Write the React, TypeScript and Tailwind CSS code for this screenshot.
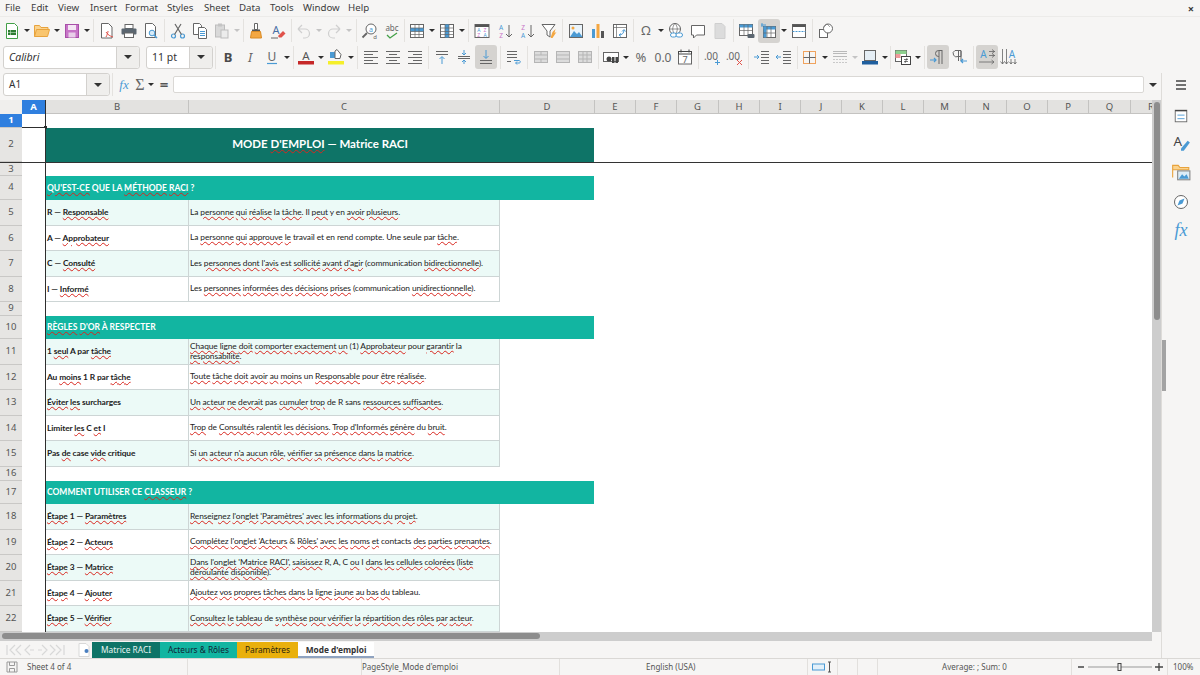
import type { ReactNode } from "react";

const uiFont = "font-['Noto_Sans','Open_Sans',sans-serif]";
const cellFont = "font-['Lato','Noto_Sans',sans-serif]";
const BL = "#4a9ad4";
const GR = "#666666";

function Svg({ children, size = "w-[18px] h-[18px]" }: { children: ReactNode; size?: string }) {
  return (
    <svg viewBox="0 0 18 18" className={size} fill="none" strokeWidth="1">
      {children}
    </svg>
  );
}

function Tool({ children, active }: { children: ReactNode; active?: boolean }) {
  return (
    <div className={`w-[22px] h-[24px] shrink-0 flex items-center justify-center rounded-[3px] ${active ? "bg-[#d5d3d0]" : ""}`}>
      <Svg>{children}</Svg>
    </div>
  );
}

function Drop({ light }: { light?: boolean }) {
  return (
    <div className="w-[8px] h-[23px] shrink-0 flex items-center justify-center">
      <span className={`w-0 h-0 border-x-[3px] border-x-transparent border-t-[3px] ${light ? "border-t-[#c4c4c4]" : "border-t-[#2e2e2e]"}`} />
    </div>
  );
}

function Sep({ w }: { w: string }) {
  return (
    <div className={`${w} shrink-0 flex justify-center`}>
      <span className="w-px h-[23px] bg-[#e4e2df]" />
    </div>
  );
}

function Lines({ ys, x1 = 3, x2 = 15, color = GR }: { ys: number[]; x1?: number; x2?: number; color?: string }) {
  return (
    <>
      {ys.map((y) => (
        <path key={y} d={`M${x1} ${y + 0.5}H${x2}`} stroke={color} />
      ))}
    </>
  );
}

function GridIcon({ hl }: { hl: "row" | "col" }) {
  return (
    <>
      <rect x="2.5" y="2.5" width="13" height="13" fill="#fff" stroke={GR} />
      {hl === "row" ? <rect x="2.5" y="6" width="13" height="3.5" fill={BL} /> : <rect x="7" y="2.5" width="4" height="13" fill={BL} />}
      <path d="M2.5 6h13M2.5 9.5h13M2.5 12.5h13M7 2.5v13M11 2.5v13" stroke={GR} strokeWidth="0.7" />
    </>
  );
}

function MergeIcon({ variant }: { variant: number }) {
  return (
    <>
      <rect x="2.5" y="3.5" width="13" height="11" fill="#dcdcdc" stroke="#b5b5b5" />
      <path d={variant === 0 ? "M2.5 7h13M2.5 11h13M9 3.5V7M9 11v3.5" : variant === 1 ? "M2.5 7h13M2.5 11h13" : "M2.5 7h13M2.5 11h13M7 3.5v11M11 3.5v11"} stroke="#b5b5b5" />
    </>
  );
}

function Letter({ x, y, size, fill, children, weight, family, italic }: { x: number; y: number; size: number; fill: string; children: string; weight?: number; family?: string; italic?: boolean }) {
  return (
    <text x={x} y={y} fontSize={size} fill={fill} fontWeight={weight} fontStyle={italic ? "italic" : undefined} fontFamily={family ?? "Noto Sans, sans-serif"} textAnchor="middle">
      {children}
    </text>
  );
}

function ToolbarOne() {
  return (
    <div className="h-[28px] flex items-center pl-[1px] pb-[1px]">
      <Tool>
        <path d="M3.5 1.5h8l3 3v12h-11z" fill="#fff" stroke="#43a047" />
        <rect x="5" y="8" width="8" height="5" fill="#2e7d32" />
        <path d="M7.5 8v5M5 10.5h8" stroke="#c8e6c9" strokeWidth="0.6" />
      </Tool>
      <Drop />
      <Tool>
        <path d="M1.5 14.5v-11h5l1.5 2h7v2" fill="#fbd38d" stroke="#e8a33d" />
        <path d="M1.5 14.5l2-7h13l-2 7z" fill="#f9c56e" stroke="#e8a33d" />
      </Tool>
      <Drop />
      <Tool>
        <rect x="2.5" y="2.5" width="13" height="13" fill="#c774c7" stroke="#a84fa8" />
        <rect x="5" y="3" width="8" height="5" fill="#f4e6f4" />
        <rect x="5.5" y="10.5" width="7" height="5" fill="#e9cfe9" />
      </Tool>
      <Drop />
      <Sep w="w-[5px]" />
      <Tool>
        <path d="M3.5 1.500h7l3.500 3.500v11h-10.500z" fill="#fff" stroke={GR} />
        <path d="M8 10c2 3 4 4 7 5M8 15c1-2 2-4 2-6" stroke="#e0524a" />
      </Tool>
      <Tool>
        <rect x="5" y="2.500" width="8" height="4" fill="#fff" stroke={GR} />
        <rect x="1.500" y="6.500" width="15" height="6" rx="1" fill="#5b6670" />
        <rect x="4.500" y="11" width="9" height="4.500" fill="#fff" stroke={GR} />
      </Tool>
      <Tool>
        <path d="M3.500 1.500h7l3 3v11h-10z" fill="#fff" stroke={GR} />
        <circle cx="10" cy="11" r="2.800" fill="#d7ebf8" stroke={BL} />
        <path d="M12 13l3 3" stroke={BL} strokeWidth="1.500" />
      </Tool>
      <Sep w="w-[5px]" />
      <Tool>
        <circle cx="4.500" cy="14" r="2" stroke={BL} strokeWidth="1.200" />
        <circle cx="13.500" cy="14" r="2" stroke={BL} strokeWidth="1.200" />
        <path d="M5.500 12.500L12 2M12.500 12.500L6 2" stroke={GR} strokeWidth="1.200" />
      </Tool>
      <Tool>
        <path d="M2.500 1.500h6l2 2v9h-8z" fill="#fff" stroke={GR} />
        <path d="M7.500 5.500h6l2 2v9h-8z" fill="#fff" stroke={GR} />
        <Lines ys={[9, 11, 13]} x1={9} x2={14} color={BL} />
      </Tool>
      <Tool>
        <rect x="2.500" y="3" width="9" height="12" fill="#d9d9d9" stroke="#bdbdbd" />
        <rect x="5" y="1.500" width="4" height="3" fill="#c4c4c4" />
        <rect x="8" y="8" width="7" height="8" fill="#ececec" stroke="#bdbdbd" />
      </Tool>
      <Drop light />
      <Sep w="w-[4px]" />
      <Tool>
        <path d="M7.500 1.500h3v6h-3z" fill="#fff" stroke={GR} />
        <path d="M5 7.500h8v2H5z" fill="#555" />
        <path d="M4.500 9.500h9l1 6.500h-11z" fill="#f4a742" stroke="#d98a24" />
      </Tool>
      <Tool>
        <Letter x={7} y={12} size={11} fill="#4a6fa5">A</Letter>
        <path d="M9 14l5-5 2.500 2.500-4 4h-2.500z" fill="#e0524a" />
        <path d="M2 16h7" stroke={GR} />
      </Tool>
      <Sep w="w-[4px]" />
      <Tool>
        <path d="M3 7l4-4M3 7l4 4M3 7h7a4.500 4.500 0 0 1 0 9H8" stroke="#cfcfcf" strokeWidth="1.200" />
      </Tool>
      <Drop light />
      <Tool>
        <path d="M15 7l-4-4M15 7l-4 4M15 7H8a4.500 4.500 0 0 0 0 9h2" stroke="#cfcfcf" strokeWidth="1.200" />
      </Tool>
      <Drop light />
      <Sep w="w-[6px]" />
      <Tool>
        <circle cx="10" cy="7" r="5" fill="#fff" stroke={GR} />
        <Letter x={10} y={9.500} size={7} fill={BL}>a</Letter>
        <path d="M6 11l-4.500 4.500" stroke={GR} strokeWidth="1.800" />
        <Letter x={14} y={17} size={6} fill={GR}>d</Letter>
      </Tool>
      <Tool>
        <Letter x={9} y={9} size={8} fill={GR}>abc</Letter>
        <path d="M4 13l3 3 7-5" stroke="#43a047" strokeWidth="1.300" />
      </Tool>
      <Sep w="w-[3px]" />
      <Tool><GridIcon hl="row" /></Tool>
      <Drop />
      <Tool><GridIcon hl="col" /></Tool>
      <Drop />
      <Sep w="w-[5px]" />
      <Tool>
        <rect x="2" y="2.500" width="14" height="13" fill="#fff" stroke={GR} />
        <rect x="2" y="2.500" width="14" height="2.500" fill="#555" />
        <Letter x={5.800} y={10} size={5} fill={BL}>A</Letter>
        <Letter x={12} y={10} size={5} fill="#c774c7">Z</Letter>
        <Letter x={5.800} y={15} size={5} fill="#c774c7">Z</Letter>
        <Letter x={12} y={15} size={5} fill={BL}>A</Letter>
      </Tool>
      <div className="w-px shrink-0" />
      <Tool>
        <Letter x={5} y={8} size={6.500} fill={BL}>A</Letter>
        <Letter x={5} y={16} size={6.500} fill="#c774c7">Z</Letter>
        <path d="M13 3v12M10 12l3 3 3-3" stroke={GR} />
      </Tool>
      <Tool>
        <Letter x={5} y={8} size={6.500} fill="#c774c7">Z</Letter>
        <Letter x={5} y={16} size={6.500} fill={BL}>A</Letter>
        <path d="M13 3v12M10 12l3 3 3-3" stroke={GR} />
      </Tool>
      <Tool>
        <path d="M2 2.500h13l-5 6.500v6l-3-2v-4z" fill="#fff" stroke={GR} />
        <path d="M10.500 16l2-6 3-3-1 4 2-1-4 6z" fill="#f4a742" />
      </Tool>
      <Sep w="w-[5px]" />
      <Tool>
        <rect x="2.500" y="2.500" width="13" height="13" fill="#eaf4fb" stroke={GR} />
        <circle cx="6" cy="6" r="1.500" fill="#f4a742" />
        <path d="M3 15l4-6 3 3 2-2 3.500 5z" fill={BL} />
      </Tool>
      <Tool>
        <rect x="3" y="7" width="3" height="9" fill={BL} />
        <rect x="7.500" y="2" width="3" height="14" fill="#f4a742" />
        <rect x="12" y="9" width="3" height="7" fill="#555" />
      </Tool>
      <Tool>
        <rect x="2.500" y="2.500" width="13" height="13" fill="#fff" stroke={GR} />
        <path d="M2.500 5.500h13M5.500 2.500v13" stroke={GR} strokeWidth="0.700" />
        <path d="M8 13c3 0 5-2 5-5M11 9.500L13 7.500l1.500 2M8 13l2-1.500M8 13l2 1.500" stroke={BL} />
      </Tool>
      <Sep w="w-[4px]" />
      <Tool>
        <Letter x={9} y={13} size={13} fill={GR}>Ω</Letter>
      </Tool>
      <Drop />
      <Tool>
        <circle cx="8" cy="7" r="5.500" fill="#fff" stroke={GR} />
        <path d="M2.500 7h11M8 1.500c-3 3-3 8 0 11M8 1.500c3 3 3 8 0 11" stroke={GR} strokeWidth="0.700" />
        <rect x="3.500" y="11" width="6" height="4" rx="2" fill="#fff" stroke={BL} />
        <rect x="9" y="11" width="6.500" height="4" rx="2" fill="#fff" stroke={BL} />
      </Tool>
      <Tool>
        <path d="M2.500 3.500h13v9.500H7.500L4.500 16v-3h-2z" fill="#fff" stroke={GR} />
      </Tool>
      <Tool>
        <path d="M4 1.500h7l3 3v12H4z" fill="#dcdcdc" stroke="#cfcfcf" />
      </Tool>
      <Sep w="w-[5px]" />
      <Tool>
        <rect x="1.500" y="2.500" width="13" height="11" fill="#fff" stroke={GR} />
        <rect x="1.500" y="2.500" width="13" height="3" fill={BL} />
        <path d="M1.500 8.500h13M6 2.500v11M10 2.500v11" stroke={GR} strokeWidth="0.700" />
        <rect x="9.500" y="12" width="7" height="4" rx="1" fill="#5b6670" />
      </Tool>
      <Tool active>
        <rect x="3.500" y="4.500" width="12" height="11" fill="#fff" stroke={GR} />
        <rect x="3.500" y="4.500" width="12" height="3" fill={BL} />
        <rect x="3.500" y="4.500" width="3" height="11" fill={BL} />
        <path d="M3.500 11h12M7 4.500v11M11 4.500v11" stroke={GR} strokeWidth="0.700" />
        <path d="M2 1v4M1 3h5" stroke={BL} />
      </Tool>
      <Drop />
      <Tool>
        <rect x="2.500" y="2.500" width="13" height="13" fill="#fff" stroke={GR} />
        <rect x="2.500" y="2.500" width="13" height="2.500" fill="#555" />
        <path d="M2.500 9.500h13" stroke={BL} strokeDasharray="2 1" />
      </Tool>
      <Sep w="w-[5px]" />
      <Tool>
        <rect x="2.500" y="7.500" width="8" height="8" fill="#fff" stroke={GR} />
        <circle cx="11" cy="6.500" r="4.500" fill="#fff" stroke={GR} />
        <path d="M7 5l3-3 3 3" stroke={GR} strokeWidth="0.600" />
      </Tool>
    </div>
  );
}

function AlignIcon({ kind }: { kind: "l" | "c" | "r" }) {
  const rows = [3, 6, 9, 12, 15];
  return (
    <>
      {rows.map((y, i) => {
        const short = i % 2 === 1;
        const x1 = kind === "l" ? 2 : kind === "c" ? (short ? 5 : 2) : short ? 7 : 2;
        const x2 = kind === "l" ? (short ? 11 : 16) : kind === "c" ? (short ? 13 : 16) : 16;
        return <path key={y} d={`M${x1} ${y + 0.5}H${x2}`} stroke={GR} />;
      })}
    </>
  );
}

function ToolbarTwo() {
  return (
    <div className="h-[28px] flex items-center pl-[3px] pb-[4px]">
      <div className="w-[137px] h-[23px] shrink-0 flex bg-white border border-[#d3d1ce] rounded-[3px]">
        <span className="flex-1 pl-[5px] text-[10.500px] italic leading-[21px] text-[#333]">Calibri</span>
        <span className="w-[23px] bg-[#efeeec] border-l border-[#d3d1ce] rounded-r-[3px] flex items-center justify-center">
          <span className="w-0 h-0 border-x-[4px] border-x-transparent border-t-[4px] border-t-[#333]" />
        </span>
      </div>
      <div className="w-[67px] h-[23px] ml-[6px] shrink-0 flex bg-white border border-[#d3d1ce] rounded-[3px]">
        <span className="flex-1 pl-[5px] text-[10.500px] leading-[21px] text-[#333]">11 pt</span>
        <span className="w-[23px] bg-[#efeeec] border-l border-[#d3d1ce] rounded-r-[3px] flex items-center justify-center">
          <span className="w-0 h-0 border-x-[4px] border-x-transparent border-t-[4px] border-t-[#333]" />
        </span>
      </div>
      <Sep w="w-[4px]" />
      <Tool><Letter x={9} y={14} size={13} fill="#4a4a4a" weight={700}>B</Letter></Tool>
      <Tool><Letter x={9} y={14} size={13} fill="#666" italic>I</Letter></Tool>
      <Tool>
        <Letter x={9} y={12.500} size={12} fill="#666">U</Letter>
        <path d="M4 15.500h10" stroke={BL} strokeWidth="1.200" />
      </Tool>
      <Drop />
      <Sep w="w-[4px]" />
      <Tool>
        <Letter x={9} y={12} size={11.500} fill="#555">A</Letter>
        <rect x="1" y="13" width="16" height="3.500" fill="#c62828" />
      </Tool>
      <Drop />
      <Tool>
        <path d="M3 4h5v6H3z" fill={BL} />
        <path d="M8 3l2-1.500 4 5-1 4H8z" fill="#fff" stroke={GR} />
        <rect x="1" y="13" width="16" height="3.500" fill="#f5ef2a" />
      </Tool>
      <Drop />
      <Sep w="w-[5px]" />
      <Tool><AlignIcon kind="l" /></Tool>
      <Tool><AlignIcon kind="c" /></Tool>
      <Tool><AlignIcon kind="r" /></Tool>
      <Sep w="w-[5px]" />
      <Tool>
        <Lines ys={[3, 6]} x1={3} x2={15} />
        <path d="M9 16V9M6.500 11L9 8.500l2.500 2.500" stroke={BL} />
      </Tool>
      <Tool>
        <Lines ys={[8, 10]} x1={3} x2={15} />
        <path d="M9 2v5M7 5l2 2 2-2M9 16v-4M7 14l2-2 2 2" stroke={BL} />
      </Tool>
      <Tool active>
        <Lines ys={[12, 15]} x1={3} x2={15} />
        <path d="M9 2v8M6.500 8L9 10.500 11.500 8" stroke={BL} />
      </Tool>
      <Sep w="w-[6px]" />
      <Tool>
        <Lines ys={[3, 6, 9]} x1={2} x2={12} />
        <path d="M2 13.500h4" stroke={GR} />
        <path d="M9 12.500h5c1.500 0 2 2.500 0 2.500h-3M12 13.500L10.500 15l1.500 1.500" stroke={BL} />
      </Tool>
      <Sep w="w-[5px]" />
      <Tool><MergeIcon variant={0} /></Tool>
      <Tool><MergeIcon variant={1} /></Tool>
      <Tool><MergeIcon variant={2} /></Tool>
      <Sep w="w-[4px]" />
      <Tool>
        <rect x="1.500" y="4.500" width="15" height="9" fill="#fff" stroke={GR} />
        <circle cx="7" cy="11" r="2.500" fill="#444" />
        <rect x="10" y="9" width="2.500" height="6" fill="#444" />
        <rect x="13.500" y="9" width="2.500" height="6" fill="#444" />
      </Tool>
      <Drop />
      <Tool><Letter x={9} y={14} size={13} fill={GR}>%</Letter></Tool>
      <Tool><Letter x={9} y={14} size={12} fill={GR}>0.0</Letter></Tool>
      <Tool>
        <rect x="2.500" y="3.500" width="13" height="12.500" fill="#fff" stroke={GR} />
        <path d="M2.500 3.500h13v2.500h-13zM5 1.500v3M13 1.500v3" stroke="#444" />
        <Letter x={9} y={14.500} size={9} fill={GR}>7</Letter>
      </Tool>
      <Sep w="w-[5px]" />
      <Tool>
        <Letter x={8} y={12} size={10} fill={GR}>.00</Letter>
        <path d="M12 14.500h5M14.500 12v5" stroke={BL} />
      </Tool>
      <Tool>
        <Letter x={8} y={12} size={10} fill={GR}>.00</Letter>
        <path d="M12 12l5 5M17 12l-5 5" stroke="#e0524a" />
      </Tool>
      <Sep w="w-[6px]" />
      <Tool>
        <Lines ys={[3, 6, 9, 12, 15]} x1={8} x2={16} />
        <path d="M1 9h5M4 7l2 2-2 2" stroke={BL} />
      </Tool>
      <Tool>
        <Lines ys={[3, 6, 9, 12, 15]} x1={8} x2={16} />
        <path d="M6 9H1M3 7L1 9l2 2" stroke={BL} />
      </Tool>
      <Sep w="w-[4px]" />
      <Tool>
        <rect x="2.500" y="3.500" width="12" height="12" stroke="#f0a35e" />
        <path d="M8.500 3.500v12M2.500 9.500h12" stroke={GR} />
      </Tool>
      <Drop />
      <Tool>
        <Lines ys={[3, 5, 8]} x1={2} x2={16} color="#b9b9b9" />
        <path d="M2 11.500h14M2 14.500h14" stroke="#c9c9c9" strokeDasharray="2 1" />
      </Tool>
      <Drop light />
      <Tool>
        <rect x="3.500" y="2.500" width="11" height="10" fill="#e5eef5" stroke={GR} />
        <rect x="1" y="13" width="16" height="3.500" fill="#1f5f9e" />
      </Tool>
      <Drop />
      <Sep w="w-[3px]" />
      <Tool>
        <rect x="1.500" y="2.500" width="11" height="11" fill="#fff" stroke={GR} />
        <rect x="1.500" y="2.500" width="11" height="3.500" fill="#8ed08e" />
        <rect x="1.500" y="6" width="5" height="4" fill="#ef9a9a" />
        <rect x="7.500" y="8.500" width="9" height="8" fill="#fff" stroke="#444" />
        <path d="M10 11.500h4M10 13.500h4M13 10l-2 5" stroke="#444" strokeWidth="0.700" />
      </Tool>
      <Drop />
      <Sep w="w-[5px]" />
      <Tool active>
        <path d="M13 2v14M10 2v14M13 2.500H9.500a3 3 0 0 0 0 6H10" stroke={GR} />
        <path d="M1 12h6M5 10l2 2-2 2" stroke={BL} strokeWidth="1.200" />
      </Tool>
      <Tool>
        <path d="M4 2.500h6v6H7a3 3 0 0 1-3-6zM7.500 3v10M10 3v10" stroke={GR} />
        <path d="M16 13h-6M12 11l-2 2 2 2" stroke={BL} strokeWidth="1.200" />
      </Tool>
      <Sep w="w-[5px]" />
      <Tool active>
        <Letter x={5.500} y={9.500} size={10} fill={BL}>A</Letter>
        <path d="M11 3.500h6M14 1.500l2.500 2-2.500 2M11 7.500h6M14 5.500l2.500 2-2.500 2M1 14h15M13.500 12l2.500 2-2.500 2" stroke={GR} strokeWidth="0.800" />
      </Tool>
      <Tool>
        <Letter x={12} y={9.500} size={10} fill={BL}>A</Letter>
        <path d="M2.500 1v15M.5 13.500l2 2.500 2-2.500M6.500 1v15M4.500 13.500l2 2.500 2-2.500M11 11v5M9.500 14l1.500 2 1.500-2M15 11v5M13.500 14l1.500 2 1.500-2" stroke={GR} strokeWidth="0.800" />
      </Tool>
    </div>
  );
}

function FormulaBar() {
  return (
    <div className="h-[27px] flex items-center pl-[3px] pb-[4px] shrink-0">
      <div className="w-[107px] h-[23px] shrink-0 flex bg-white border border-[#d3d1ce] rounded-[3px]">
        <span className="flex-1 pl-[5px] text-[10px] leading-[21px] text-[#333]">A1</span>
        <span className="w-[23px] bg-[#efeeec] border-l border-[#d3d1ce] rounded-r-[3px] flex items-center justify-center">
          <span className="w-0 h-0 border-x-[4px] border-x-transparent border-t-[4px] border-t-[#333]" />
        </span>
      </div>
      <Sep w="w-[4px]" />
      <div className="w-[18px] ml-[1px] shrink-0 text-center text-[#4a9ad4] text-[13px] italic font-['Liberation_Serif',serif]">fx</div>
      <div className="w-[14px] shrink-0 text-center text-[#666] text-[16px] leading-none font-['Liberation_Serif',serif]">Σ</div>
      <Drop />
      <div className="w-[18px] shrink-0 text-center text-[#555] text-[15px] font-bold leading-none">=</div>
      <div className="w-[971px] h-[17px] shrink-0 bg-white border border-[#dad8d5] rounded-[2px]" />
      <div className="flex-1 flex justify-center">
        <span className="w-0 h-0 border-x-[4px] border-x-transparent border-t-[4px] border-t-[#333]" />
      </div>
    </div>
  );
}

const columns = [
  { n: "B", w: "w-[143px]" },
  { n: "C", w: "w-[311px]" },
  { n: "D", w: "w-[95px]" },
  { n: "E", w: "w-[41px]" },
  { n: "F", w: "w-[41px]" },
  { n: "G", w: "w-[42px]" },
  { n: "H", w: "w-[41px]" },
  { n: "I", w: "w-[41px]" },
  { n: "J", w: "w-[41px]" },
  { n: "K", w: "w-[41px]" },
  { n: "L", w: "w-[41px]" },
  { n: "M", w: "w-[42px]" },
  { n: "N", w: "w-[41px]" },
  { n: "O", w: "w-[41px]" },
  { n: "P", w: "w-[41px]" },
  { n: "Q", w: "w-[42px]" },
  { n: "R", w: "w-[41px]" },
];

// {mot} = souligné par le correcteur
function Spell({ text }: { text: string }) {
  return (
    <>
      {text.split(/(\{[^}]+\})/).map((part, i) =>
        part.startsWith("{") ? (
          <span key={i} className="underline decoration-wavy decoration-[#d8261e] decoration-[0.7px] underline-offset-[1px]">
            {part.slice(1, -1)}
          </span>
        ) : (
          <span key={i}>{part}</span>
        ),
      )}
    </>
  );
}

function RowHead({ n, active }: { n: number; active?: boolean }) {
  return (
    <div className={`w-[22px] shrink-0 flex items-center justify-center text-[9.500px] border-b border-[#c9c8c6] ${uiFont} ${active ? "bg-[#2f7fdf] text-white font-bold" : "bg-[#e6e5e3] text-[#555]"}`}>
      {n}
    </div>
  );
}

function ACell({ selected }: { selected?: boolean }) {
  return (
    <div className={`relative w-[24px] shrink-0 bg-white border-r border-r-[#2e2e2e] ${selected ? "border-b border-b-[#2e2e2e]" : ""}`}>
      {selected && <span className="absolute right-[-2px] bottom-[-2px] w-[3px] h-[3px] bg-[#2e2e2e]" />}
    </div>
  );
}

function BlankRow({ n, h, selected }: { n: number; h: string; selected?: boolean }) {
  return (
    <div className={`${h} shrink-0 flex`}>
      <RowHead n={n} active={selected} />
      <ACell selected={selected} />
      <div className="flex-1 bg-white" />
    </div>
  );
}

function BandRow({ n, h, label }: { n: number; h: string; label: string }) {
  return (
    <div className={`${h} shrink-0 flex`}>
      <RowHead n={n} />
      <ACell />
      <div className={`w-[548px] pl-[1px] flex items-center bg-[#12b5a1] text-white text-[8.500px] font-bold ${cellFont}`}>
        <span><Spell text={label} /></span>
      </div>
      <div className="flex-1 bg-white" />
    </div>
  );
}

function DataRow({ n, h, tint, name, text }: { n: number; h: string; tint?: boolean; name: string; text: string }) {
  const bg = tint ? "bg-[#ecfaf7]" : "bg-white";
  return (
    <div className={`${h} shrink-0 flex`}>
      <RowHead n={n} />
      <ACell />
      <div className={`w-[143px] pl-[1px] flex items-center font-bold text-[#1c1c1c] text-[8.400px] tracking-[-0.1px] border-r border-b border-[#cdd5d5] ${cellFont} ${bg}`}>
        <span><Spell text={name} /></span>
      </div>
      <div className={`w-[311px] px-[1px] flex items-center text-[#222] text-[8.400px] tracking-[-0.1px] leading-[9.500px] border-r border-b border-[#cdd5d5] ${cellFont} ${bg}`}>
        <span><Spell text={text} /></span>
      </div>
      <div className="flex-1 bg-white" />
    </div>
  );
}

function Sheet() {
  return (
    <div className="h-[532px] shrink-0 flex">
      <div className="w-[1152px] shrink-0 flex flex-col overflow-hidden">
        <div className={`h-[14px] shrink-0 flex text-[9.500px] text-[#555] ${uiFont}`}>
          <div className="w-[22px] shrink-0 bg-[#f0efed]" />
          <div className="w-[24px] shrink-0 bg-[#2f7fdf] text-white font-bold text-center leading-[14px] border-r border-r-[#2e2e2e]">A</div>
          {columns.map((c) => (
            <div key={c.n} className={`${c.w} shrink-0 bg-[#e3e2e0] text-center leading-[14px] border-r border-b border-[#c4c3c1]`}>
              {c.n}
            </div>
          ))}
        </div>
        <BlankRow n={1} h="h-[14px]" selected />
        <div className="h-[35px] shrink-0 flex border-b border-b-[#333]">
          <RowHead n={2} />
          <ACell />
          <div className={`w-[548px] pb-[2px] flex items-center justify-center bg-[#0e7467] text-white text-[11.500px] font-bold ${cellFont}`}>
            <span><Spell text="MODE {D'EMPLOI} — Matrice RACI" /></span>
          </div>
          <div className="flex-1 bg-white" />
        </div>
        <BlankRow n={3} h="h-[13px]" />
        <BandRow n={4} h="h-[24px]" label="{QU'EST-CE} QUE LA {MÉTHODE} {RACI} ?" />
        <DataRow n={5} h="h-[26px]" tint name="R — {Responsable}" text="La {personne} {qui} {réalise} la {tâche}. Il {peut} y en {avoir} {plusieurs}." />
        <DataRow n={6} h="h-[25px]" name="A — {Approbateur}" text="La {personne} {qui} {approuve} {le} travail et en rend compte. Une seule par {tâche}." />
        <DataRow n={7} h="h-[26px]" tint name="C — {Consulté}" text="Les {personnes} {dont} {l'avis} est {sollicité} {avant} {d'agir} (communication {bidirectionnelle})." />
        <DataRow n={8} h="h-[25px]" name="I — {Informé}" text="Les {personnes} {informées} {des} {décisions} {prises} (communication {unidirectionnelle})." />
        <BlankRow n={9} h="h-[14px]" />
        <BandRow n={10} h="h-[23px]" label="{RÈGLES} {D'OR} À RESPECTER" />
        <DataRow n={11} h="h-[26px]" tint name="1 {seul} A par {tâche}" text="{Chaque} {ligne} {doit} {comporter} {exactement} {un} (1) {Approbateur} pour {garantir} la {responsabilité}." />
        <DataRow n={12} h="h-[25px]" name="Au {moins} 1 R par {tâche}" text="{Toute} {tâche} {doit} {avoir} {au} {moins} un {Responsable} pour {être} {réalisée}." />
        <DataRow n={13} h="h-[26px]" tint name="{Éviter} {les} surcharges" text="{Un} {acteur} {ne} {devrait} pas {cumuler} {trop} de R sans {ressources} {suffisantes}." />
        <DataRow n={14} h="h-[25px]" name="Limiter {les} C {et} I" text="{Trop} de {Consultés} {ralentit} {les} {décisions}. {Trop} {d'Informés} {génère} du {bruit}." />
        <DataRow n={15} h="h-[26px]" tint name="Pas {de} case {vide} critique" text="Si {un} {acteur} {n'a} {aucun} {rôle}, {vérifier} {sa} {présence} {dans} {la} {matrice}." />
        <BlankRow n={16} h="h-[14px]" />
        <BandRow n={17} h="h-[23px]" label="COMMENT UTILISER CE {CLASSEUR} ?" />
        <DataRow n={18} h="h-[26px]" tint name="{Étape} 1 — {Paramètres}" text="{Renseignez} {l'onglet} {'Paramètres'} {avec} {les} {informations} {du} {projet}." />
        <DataRow n={19} h="h-[25px]" name="{Étape} 2 — {Acteurs}" text="{Complétez} {l'onglet} {'Acteurs} & {Rôles'} {avec} {les} {noms} {et} contacts {des} {parties} {prenantes}." />
        <DataRow n={20} h="h-[26px]" tint name="{Étape} 3 — {Matrice}" text="{Dans} {l'onglet} {'Matrice} {RACI'}, {saisissez} R, A, C {ou} I {dans} {les} {cellules} {colorées} ({liste} {déroulante} {disponible})." />
        <DataRow n={21} h="h-[25px]" name="{Étape} 4 — {Ajouter}" text="{Ajoutez} {vos} {propres} {tâches} {dans} {la} {ligne} {jaune} {au} {bas} {du} tableau." />
        <DataRow n={22} h="h-[26px]" tint name="{Étape} 5 — {Vérifier}" text="{Consultez} {le} {tableau} de {synthèse} {pour} {vérifier} {la} {répartition} {des} {rôles} {par} {acteur}." />
      </div>
      <div className="w-[9px] shrink-0 bg-[#cdcdcd] pt-[2px]">
        <div className="w-[6px] h-[218px] mx-auto rounded-[3px] bg-[#8d8d8d]" />
      </div>
    </div>
  );
}

function TabBar() {
  return (
    <div className={`h-[16px] shrink-0 flex items-stretch text-[8.300px] ${uiFont}`}>
      <div className="w-[75px] shrink-0 pl-[6px] flex items-center">
        <svg viewBox="0 0 60 12" className="w-[60px] h-[12px]" fill="none" stroke="#d8d8d8" strokeWidth="1.200">
          <path d="M1 1v10M9 1L4 6l5 5M15 1l-5 5 5 5M24 1l-5 5 5 5M24 6h4M32 6h4M36 1l5 5-5 5M44 1l5 5-5 5M50 1l5 5-5 5M58 1v10" />
        </svg>
      </div>
      <div className="w-[17px] shrink-0 flex items-center justify-center">
        <svg viewBox="0 0 12 14" className="w-[12px] h-[14px]">
          <path d="M1 .5h7l3 3v10H1z" fill="#fff" stroke="#d8d8d8" />
          <circle cx="8.500" cy="8" r="2" fill="#4a7fc0" />
        </svg>
      </div>
      <div className="w-[68px] shrink-0 bg-[#0e7467] text-[#e8f5f3] text-center leading-[16px]">Matrice RACI</div>
      <div className="w-[77px] shrink-0 bg-[#12b5a1] text-[#123] text-center leading-[16px]">Acteurs &amp; Rôles</div>
      <div className="w-[61px] shrink-0 bg-[#e9b00c] text-[#2b2410] text-center leading-[16px]">Paramètres</div>
      <div className="w-[76px] shrink-0 bg-white text-[#333] font-bold text-center leading-[15px] border-b-2 border-b-[#8fa3c0]">Mode d'emploi</div>
    </div>
  );
}

function StatusCell({ w, children, center }: { w: string; children?: ReactNode; center?: boolean }) {
  return (
    <div className={`${w} shrink-0 h-full flex items-center border-r border-[#e2e0dd] ${center ? "justify-center" : ""}`}>
      {children}
    </div>
  );
}

function StatusBar() {
  return (
    <div className={`h-[17px] shrink-0 flex items-center border-t border-[#dad8d5] text-[8px] text-[#555] ${uiFont}`}>
      <div className="w-[27px] shrink-0 pl-[6px]">
        <svg viewBox="0 0 12 12" className="w-[12px] h-[12px]" fill="none" stroke="#9a9a9a">
          <path d="M1 1h10v10H1zM3.500 1v3.500h5V1M3.500 11V7.500h5V11" />
        </svg>
      </div>
      <StatusCell w="w-[161px]">Sheet 4 of 4</StatusCell>
      <StatusCell w="w-[174px]"></StatusCell>
      <StatusCell w="w-[198px]">PageStyle_Mode d'emploi</StatusCell>
      <StatusCell w="w-[248px]"><span className="pl-[86px]">English (USA)</span></StatusCell>
      <StatusCell w="w-[30px]" center>
        <svg viewBox="0 0 22 12" className="w-[22px] h-[12px]" fill="none">
          <rect x=".5" y="3" width="12" height="6" fill="#e3f0f9" stroke={BL} />
          <path d="M16 1h3M17.500 1v10M16 11h3" stroke="#555" />
        </svg>
      </StatusCell>
      <StatusCell w="w-[20px]" />
      <StatusCell w="w-[20px]" />
      <StatusCell w="w-[194px]" center>Average: ; Sum: 0</StatusCell>
      <div className="w-[96px] pl-[5px] shrink-0 flex items-center border-r border-[#e2e0dd] h-full">
        <svg viewBox="0 0 88 12" className="w-[88px] h-[12px]" fill="none" stroke="#444">
          <path d="M1 6h6M78 6h8M82 2v8" strokeWidth="1.300" />
          <path d="M11 6h64" stroke="#999" />
          <rect x="41" y="2.500" width="3" height="7" fill="#eee" />
        </svg>
      </div>
      <div className="flex-1 pl-[5px]">100%</div>
    </div>
  );
}

function Sidebar() {
  return (
    <div className="relative w-[39px] shrink-0 border-l border-[#dedcd9] flex flex-col items-center pt-[4px] gap-[7px]">
      <svg viewBox="0 0 16 16" className="w-[16px] h-[16px]" fill="none" stroke="#444" strokeWidth="1.400">
        <path d="M3 4h10M3 8h10M3 12h10" />
      </svg>
      <div className="mt-[8px]">
        <Svg size="w-[16px] h-[16px]">
          <rect x="2.500" y="2.500" width="13" height="13" fill="#fff" stroke={GR} />
          <path d="M2.500 3h13" stroke="#444" strokeWidth="1.500" />
          <path d="M5 8h8M5 12h8" stroke={BL} />
        </Svg>
      </div>
      <div className="mt-[2px]">
        <Svg size="w-[20px] h-[20px]">
          <Letter x={6} y={12} size={12} fill="#444">A</Letter>
          <path d="M9 14l6-7 2 1.500-5.500 7.500H9z" fill={BL} />
        </Svg>
      </div>
      <div className="mt-[2px]">
        <Svg size="w-[20px] h-[20px]">
          <path d="M1.500 14V3h5l1.500 2h8v2H1.500" fill="#fbd38d" stroke="#e8a33d" />
          <rect x="6" y="8" width="11" height="8" fill="#dcecf7" stroke="#888" />
          <path d="M7 15l3-4 2 2 2-2 2 4z" fill={BL} />
        </Svg>
      </div>
      <div className="mt-[4px]">
        <Svg size="w-[18px] h-[18px]">
          <circle cx="9" cy="9" r="6.500" fill="#fff" stroke={GR} />
          <path d="M12.500 5.500L10.500 10.500 5.500 12.500 7.500 7.500z" fill={BL} />
        </Svg>
      </div>
      <div className="mt-[2px] text-[#4a9ad4] text-[18px] leading-[20px] italic font-['Liberation_Serif',serif]">fx</div>
      <div className="absolute left-0 top-[267px] w-[4px] h-[51px] bg-[#a3a3a3]" />
    </div>
  );
}

export default function App() {
  return (
    <div className={`w-[1200px] h-[675px] overflow-hidden flex flex-col bg-[#f6f5f4] text-[#3c3c3c] ${uiFont}`}>
      <div className="h-[17px] shrink-0 flex items-center pl-[5px] text-[9.700px] border-b border-[#ecebe9]">
        <span className="w-[26px]">File</span>
        <span className="w-[27px]">Edit</span>
        <span className="w-[32px]">View</span>
        <span className="w-[35px]">Insert</span>
        <span className="w-[42px]">Format</span>
        <span className="w-[37px]">Styles</span>
        <span className="w-[35px]">Sheet</span>
        <span className="w-[31px]">Data</span>
        <span className="w-[33px]">Tools</span>
        <span className="w-[45px]">Window</span>
        <span className="w-[30px]">Help</span>
        <span className="ml-auto pr-[6px] text-[11px] font-bold leading-none">×</span>
      </div>
      <ToolbarOne />
      <ToolbarTwo />
      <div className="h-[585px] shrink-0 flex">
        <div className="w-[1161px] shrink-0 flex flex-col">
          <FormulaBar />
          <Sheet />
          <div className="h-[10px] shrink-0 flex">
            <div className="w-[1152px] h-[9px] bg-[#cdcdcd] pl-[2px] pt-[1px]">
              <div className="w-[538px] h-[6px] rounded-[3px] bg-[#8d8d8d]" />
            </div>
          </div>
          <TabBar />
        </div>
        <Sidebar />
      </div>
      <StatusBar />
    </div>
  );
}
